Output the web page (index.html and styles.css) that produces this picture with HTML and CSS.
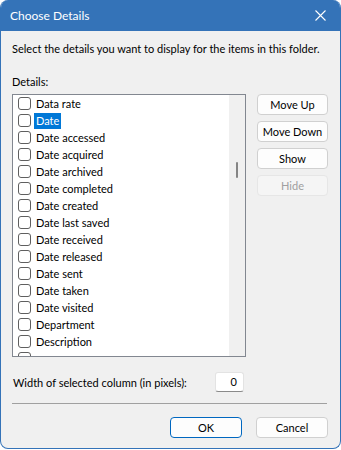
FILE: index.html
```html
<!DOCTYPE html>
<html>
<head>
  <meta charset="UTF-8">
  <meta name="viewport" content="width=device-width, initial-scale=1.0">
  <link rel="stylesheet" href="styles.css">
  <title>Choose Details</title>
</head>
<body>
  <div class="window">
    <div class="titlebar">
      <span class="title">Choose Details</span>
      <span class="close">
        <svg width="11" height="11" viewBox="0 0 11 11">
          <path d="M0.5 0.5 L10.5 10.5 M10.5 0.5 L0.5 10.5" stroke="#fff" stroke-width="1.1" fill="none"/>
        </svg>
      </span>
    </div>

    <div class="content">
      <p class="intro">Select the details you want to display for the items in this folder.</p>
      <p class="label">Details:</p>

      <div class="middle">
        <div class="listbox">
          <ul class="items">
            <li><span class="check"></span><span class="name">Data rate</span></li>
            <li><span class="check"></span><span class="name selected">Date</span></li>
            <li><span class="check"></span><span class="name">Date accessed</span></li>
            <li><span class="check"></span><span class="name">Date acquired</span></li>
            <li><span class="check"></span><span class="name">Date archived</span></li>
            <li><span class="check"></span><span class="name">Date completed</span></li>
            <li><span class="check"></span><span class="name">Date created</span></li>
            <li><span class="check"></span><span class="name">Date last saved</span></li>
            <li><span class="check"></span><span class="name">Date received</span></li>
            <li><span class="check"></span><span class="name">Date released</span></li>
            <li><span class="check"></span><span class="name">Date sent</span></li>
            <li><span class="check"></span><span class="name">Date taken</span></li>
            <li><span class="check"></span><span class="name">Date visited</span></li>
            <li><span class="check"></span><span class="name">Department</span></li>
            <li><span class="check"></span><span class="name">Description</span></li>
            <li><span class="check"></span></li>
          </ul>
          <div class="scrollbar">
            <div class="thumb"></div>
          </div>
        </div>

        <div class="side-buttons">
          <button class="btn">Move Up</button>
          <button class="btn">Move Down</button>
          <button class="btn">Show</button>
          <button class="btn" disabled>Hide</button>
        </div>
      </div>

      <div class="width-row">
        <span>Width of selected column (in pixels):</span>
        <span class="textbox">0</span>
      </div>

      <div class="separator"></div>

      <div class="footer">
        <button class="btn btn-default">OK</button>
        <button class="btn">Cancel</button>
      </div>
    </div>
  </div>
</body>
</html>
```

FILE: styles.css
```css
body {
  margin: 0;
  padding: 0;
  background-color: #ffffff;
  font-family: Lato, "Liberation Sans", sans-serif;
  font-size: 11px;
  color: #000;
}

.window {
  width: 341px;
  height: 449px;
  box-sizing: border-box;
  border: 1px solid #3473b8;
  border-top: none;
  border-radius: 8px;
  background-color: #f0f0f0;
  overflow: hidden;
  display: flex;
  flex-direction: column;
}

.titlebar {
  height: 31px;
  flex-shrink: 0;
  background-color: #3473b8;
  color: #fff;
  display: flex;
  align-items: center;
  justify-content: space-between;
  padding: 0 10px 0 9px;
}

.title {
  font-size: 12px;
}

.close {
  display: flex;
  margin-right: 4px;
}

.content {
  padding: 10px 11px 0 11px;
}

.intro {
  margin: 0;
  line-height: 16px;
  white-space: nowrap;
}

.label {
  margin: 17px 0 4px 0;
  line-height: 16px;
}

.middle {
  display: flex;
  gap: 11px;
}

.listbox {
  width: 234px;
  height: 263px;
  box-sizing: border-box;
  border: 1px solid #828790;
  background-color: #fff;
  display: flex;
  overflow: hidden;
}

.items {
  list-style: none;
  margin: 0;
  padding: 0 0 0 5px;
  flex: 1;
}

.items li {
  height: 17px;
  display: flex;
  align-items: center;
  gap: 3px;
}

.check {
  width: 11px;
  height: 11px;
  border: 1px solid #5f5f5f;
  border-radius: 3px;
  background-color: #fff;
  flex-shrink: 0;
}

.name {
  padding: 0 2px;
  line-height: 16px;
}

.name.selected {
  background-color: #0078d7;
  color: #fff;
}

.scrollbar {
  width: 16px;
  background-color: #f0f0f0;
  flex-shrink: 0;
  display: flex;
  justify-content: center;
  padding-top: 67px;
}

.thumb {
  width: 2px;
  height: 16px;
  border-radius: 1px;
  background-color: #858585;
}

.side-buttons {
  display: flex;
  flex-direction: column;
  gap: 6px;
}

.side-buttons .btn {
  width: 71px;
}

.btn {
  width: 72px;
  height: 21px;
  box-sizing: border-box;
  border: 1px solid #d0d0d0;
  border-radius: 4px;
  background-color: #fdfdfd;
  font-family: inherit;
  font-size: 11px;
  color: #000;
  padding: 0;
}

.btn:disabled {
  border-color: #e6e6e6;
  background-color: #f5f5f5;
  color: #a0a0a0;
}

.btn-default {
  border-color: #0067c0;
}

.width-row {
  margin-top: 15px;
  display: flex;
  align-items: center;
  justify-content: space-between;
  width: 231px;
  padding-left: 1px;
}

.textbox {
  width: 29px;
  height: 20px;
  box-sizing: border-box;
  background-color: #fff;
  border: 1px solid #e3e3e3;
  border-bottom-color: #8a8a8a;
  border-radius: 3px;
  text-align: right;
  padding-right: 6px;
  line-height: 18px;
}

.separator {
  margin-top: 11px;
  height: 1px;
  background-color: #a0a0a0;
  width: 315px;
}

.footer {
  margin-top: 13px;
  display: flex;
  justify-content: flex-end;
  gap: 14px;
  width: 316px;
}
```
